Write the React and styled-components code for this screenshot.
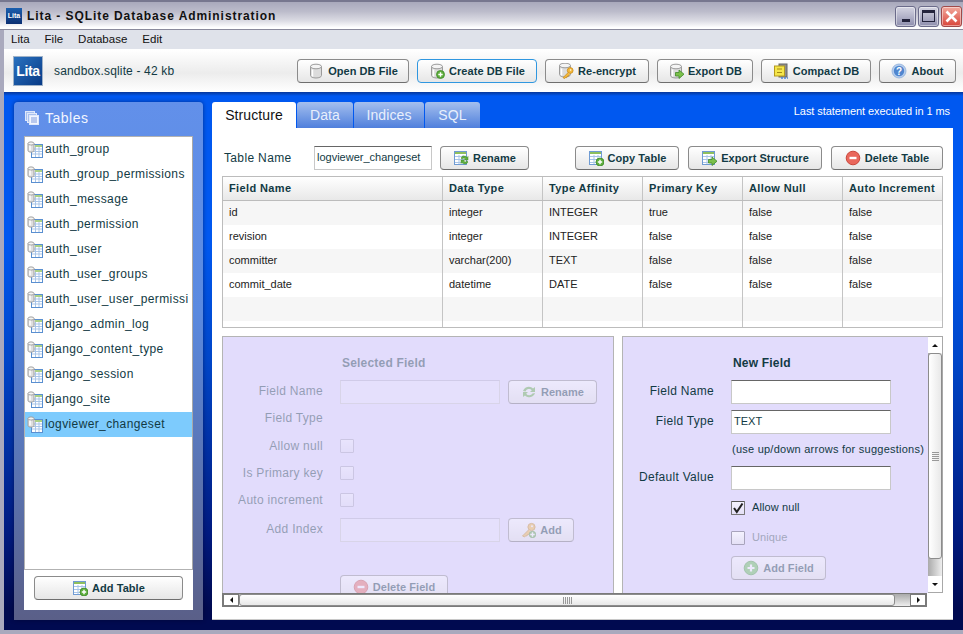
import React from "react"
import styled, { createGlobalStyle } from "styled-components"

const Global = createGlobalStyle`
  html, body { margin: 0; padding: 0; overflow: hidden; }
  body { font-family: "Liberation Sans", Arial, sans-serif; color: #123a44; }
  * { box-sizing: border-box; }
`

const Window = styled.div`
  width: 963px;
  height: 634px;
  display: flex;
  flex-direction: column;
  overflow: hidden;
  background: #a9a9bd;
`

const TitleBar = styled.div`
  height: 30px;
  flex: none;
  display: flex;
  align-items: center;
  padding: 1px 1px 0 6px;
  border-top: 2px solid #77778f;
  border-bottom: 1px solid #8a8a9c;
  background: linear-gradient(#a9a9bc 0%, #bcbccb 35%, #dcdce4 70%, #ffffff 95%);
`

const AppIcon = styled.div`
  width: 16px;
  height: 16px;
  margin-right: 5px;
  background: linear-gradient(#1b5fae, #0b2f72);
  color: #fff;
  font-size: 7px;
  font-weight: bold;
  line-height: 16px;
  text-align: center;
`

const Title = styled.div`
  font-size: 12px;
  font-weight: bold;
  letter-spacing: 0.93px;
  color: #111;
  flex: 1;
`

const WinButton = styled.div`
  width: 21px;
  height: 21px;
  margin-left: 2px;
  border: 1px solid ${p => (p.$close ? "#a04a4a" : "#6b6b8a")};
  border-radius: 3px;
  box-shadow: inset 0 0 0 1px rgba(255, 255, 255, 0.45);
  background: ${p => (p.$close ? "linear-gradient(#f2a99d, #d9453a)" : "linear-gradient(#d5d5e2, #8f8fae)")};
  display: flex;
  align-items: center;
  justify-content: center;
`

const MinGlyph = styled.div`
  width: 8px;
  height: 3px;
  margin-top: 9px;
  background: #23233c;
`

const MaxGlyph = styled.div`
  width: 13px;
  height: 12px;
  border: 1px solid #23233c;
  border-top-width: 3px;
`

const Inner = styled.div`
  flex: 1;
  min-height: 0;
  margin: 0 0 4px 4px;
  display: flex;
  flex-direction: column;
`

const MenuBar = styled.div`
  height: 20px;
  flex: none;
  display: flex;
  align-items: center;
  gap: 15px;
  padding: 0 0 1px 7px;
  background: #dfe2ea;
  border-bottom: 1px solid #fff;
  font-size: 11.5px;
  color: #111;
`

const ToolBar = styled.div`
  height: 42px;
  flex: none;
  display: flex;
  align-items: center;
  padding: 0 7px 0 9px;
  gap: 8px;
  background: linear-gradient(#ffffff, #ececec 55%, #ffffff);
`

const Logo = styled.div`
  width: 30px;
  height: 30px;
  background: linear-gradient(135deg, #2a72c0, #083a86);
  border: 1px solid #9fb2c8;
  color: #fff;
  font-size: 14px;
  font-weight: bold;
  letter-spacing: -0.3px;
  line-height: 28px;
  text-align: center;
`

const DbName = styled.div`
  margin-left: 3px;
  font-size: 12px;
  letter-spacing: 0.16px;
  flex: 1;
`

const Button = styled.div`
  width: ${p => p.$w}px;
  height: 24px;
  flex: none;
  display: flex;
  align-items: center;
  justify-content: center;
  gap: 4px;
  padding-bottom: 1px;
  border: 1px solid ${p => (p.$focus ? "#2f97e0" : "#8b8b8b")};
  border-bottom-color: ${p => (p.$focus ? "#2f97e0" : "#6e6e6e")};
  border-radius: 4px;
  background: linear-gradient(#ffffff, #e6e6e6);
  font-size: 11px;
  font-weight: bold;
  letter-spacing: 0.05px;
  white-space: nowrap;
  svg { flex: none; }
`

const Main = styled.div`
  flex: 1;
  min-height: 0;
  display: flex;
  gap: 9px;
  padding: 10px 10px 10px 10px;
  background: linear-gradient(#06369a 0, #0058f0 4px, #0058f0 28%, #0046c8 50%, #001a80 82%, #000a50 96%);
`

const SidePanel = styled.div`
  width: 189px;
  flex: none;
  display: flex;
  flex-direction: column;
  padding: 0 10px 10px;
  border-radius: 4px 4px 0 0;
  background: linear-gradient(#6290ea, #5a8ae0 40%, #5a5f88);
  box-shadow: 0 0 4px rgba(0, 0, 30, 0.45);
`

const SideHeader = styled.div`
  height: 34px;
  flex: none;
  display: flex;
  align-items: center;
  gap: 6px;
  padding: 0 0 3px 1px;
  color: #f2f6ff;
  font-size: 14px;
  letter-spacing: 0.5px;
`

const TableList = styled.div`
  flex: 1;
  min-height: 0;
  background: #fff;
  border: 1px solid #b2b2b2;
  border-right-color: #a8a8a8;
  overflow: hidden;
`

const TableItem = styled.div`
  height: 25px;
  display: flex;
  align-items: center;
  gap: 2px;
  padding: 0 3px 1px 2px;
  font-size: 12px;
  letter-spacing: 0.38px;
  white-space: nowrap;
  background: ${p => (p.$active ? "#7dcbfd" : "transparent")};
  svg { flex: none; }
`

const SideFooter = styled.div`
  height: 40px;
  flex: none;
  background: #fff;
  padding: 6px 10px 0;
`

const Content = styled.div`
  flex: 1;
  min-width: 0;
  display: flex;
  flex-direction: column;
`

const TabBar = styled.div`
  height: 26px;
  flex: none;
  display: flex;
`

const Tab = styled.div`
  width: ${p => p.$w}px;
  margin-right: 1px;
  border-radius: 3px 3px 0 0;
  display: flex;
  align-items: center;
  justify-content: center;
  font-size: 14px;
  padding-bottom: 1px;
  letter-spacing: 0.1px;
  color: ${p => (p.$active ? "#111" : "#e8effc")};
  background: ${p => (p.$active ? "#fff" : "linear-gradient(#a4bfee, #4f7fdc)")};
`

const Status = styled.div`
  margin-left: auto;
  padding: 3px 3px 0 0;
  color: #fff;
  font-size: 11px;
  letter-spacing: -0.07px;
`

const Sheet = styled.div`
  flex: 1;
  min-height: 0;
  display: flex;
  flex-direction: column;
  padding: 18px 10px 13px;
  background: #fff;
  border-bottom: 1px solid #c8c8c8;
`

const ActionRow = styled.div`
  height: 24px;
  flex: none;
  display: flex;
  align-items: center;
  gap: 8px;
  padding-left: 2px;
`

const ButtonGroup = styled.div`
  margin-left: auto;
  display: flex;
  gap: 9px;
`

const TableLabel = styled.div`
  width: 82px;
  font-size: 12px;
  letter-spacing: 0.35px;
`

const Input = styled.div`
  width: ${p => p.$w}px;
  height: 24px;
  flex: none;
  padding: 0 2px;
  font-size: 11px;
  line-height: 20px;
  white-space: nowrap;
  overflow: hidden;
  background: ${p => (p.$disabled ? "#ece8fd" : "#fff")};
  border: 1px solid #c8c8c8;
  border-top-color: ${p => (p.$disabled ? "#b4b0c8" : "#666")};
`

const Spacer = styled.div`
  flex: 1;
`

const Grid = styled.div`
  height: 152px;
  flex: none;
  margin-top: 6px;
  border: 1px solid #bcbcbc;
  overflow: hidden;
`

const GridRow = styled.div`
  height: 24px;
  display: grid;
  grid-template-columns: 220px 100px 100px 100px 100px 1fr;
  background: ${p => (p.$alt ? "#f6f6f6" : "#fff")};
`

const GridHead = styled(GridRow)`
  height: 24px;
  background: linear-gradient(#ffffff, #e8e8e8);
  border-bottom: 1px solid #bcbcbc;
  font-size: 11px;
  font-weight: bold;
  letter-spacing: 0.38px;
`

const Cell = styled.div`
  padding-left: 6px;
  font-size: 11px;
  line-height: 23px;
  color: #222;
  border-right: 1px solid #c4c4c4;
  white-space: nowrap;
  overflow: hidden;
  &:last-child { border-right: 0; }
`

const HeadCell = styled(Cell)`
  color: #123a44;
`

const ScrollPane = styled.div`
  height: 271px;
  flex: none;
  margin-top: 8px;
  display: grid;
  grid-template-columns: 706px 15px;
  grid-template-rows: 257px 14px;
`

const Viewport = styled.div`
  display: flex;
  gap: 8px;
  overflow: hidden;
`

const FormPanel = styled.div`
  width: ${p => p.$w}px;
  flex: none;
  height: 300px;
  padding-top: 16px;
  border: 1px solid #b4b4b4;
  border-right-width: ${p => (p.$open ? 0 : 1)}px;
  background: #e2dcfc;
`

const FormBody = styled.div`
  opacity: ${p => (p.$disabled ? 0.38 : 1)};
`

const FormRow = styled.div`
  height: ${p => p.$h || 24}px;
  margin-top: ${p => p.$mt || 0}px;
  display: flex;
  align-items: center;
  gap: 8px;
`

const FormLabel = styled.div`
  width: ${p => p.$w}px;
  flex: none;
  margin-right: 9px;
  padding-bottom: ${p => (p.$lift ? 3 : 0)}px;
  text-align: right;
  font-size: 12px;
  letter-spacing: 0.3px;
  white-space: nowrap;
`

const FormTitle = styled.div`
  font-size: 12px;
  font-weight: bold;
  padding: 2px 0 0 2px;
  letter-spacing: 0.2px;
`

const Hint = styled.div`
  font-size: 11px;
  letter-spacing: 0.24px;
  white-space: nowrap;
  padding-left: 1px;
`

const Check = styled.div`
  width: 14px;
  height: 14px;
  flex: none;
  display: flex;
  align-items: center;
  justify-content: center;
  border: 1px solid ${p => (p.$checked ? "#777" : "#a8a4bc")};
  border-top-color: ${p => (p.$checked ? "#555" : "#a8a4bc")};
  background: linear-gradient(#f4f2fe, #e4e0f6);
  border-radius: 1px;
`

const CheckText = styled.div`
  font-size: 11px;
  margin-left: -1px;
  padding-bottom: 2px;
  letter-spacing: 0.1px;
  color: ${p => (p.$muted ? "#a3a7bd" : "#123a44")};
`

const VScroll = styled.div`
  display: flex;
  flex-direction: column;
  border: 1px solid #a8a8a8;
  border-left: 0;
  background: linear-gradient(90deg, #aaa, #eee);
`

const HScroll = styled.div`
  display: flex;
  width: 705px;
  border: 1px solid #7a7a7a;
  background: linear-gradient(#aaa, #eee);
`

const ScrollEnd = styled.div`
  width: ${p => (p.$v ? "100%" : "16px")};
  height: ${p => (p.$v ? "16px" : "100%")};
  flex: none;
  display: flex;
  align-items: center;
  justify-content: center;
  background: #fff;
  ${p => (p.$v ? "" : "box-shadow: 0 0 0 1px #7a7a7a inset;")}
`

const Thumb = styled.div`
  display: flex;
  align-items: center;
  justify-content: center;
  flex: none;
  ${p => (p.$v ? "height: 206px; width: 100%;" : "width: 656px; height: 100%;")}
  background: ${p => (p.$v ? "linear-gradient(90deg, #fff, #e8e8e8)" : "linear-gradient(#fff, #e8e8e8)")};
  border: 1px solid #8c8c8c;
  border-radius: 3px;
`

const Grip = styled.div`
  ${p => (p.$v
    ? "width: 7px; height: 9px; background: repeating-linear-gradient(#999 0 1px, transparent 1px 2px);"
    : "width: 9px; height: 7px; background: repeating-linear-gradient(90deg, #999 0 1px, transparent 1px 2px);")}
`

const Arrow = styled.div`
  width: 0;
  height: 0;
  ${p => p.$dir === "up" && "border: 3px solid transparent; border-top: 0; border-bottom-color: #111;"}
  ${p => p.$dir === "down" && "border: 3px solid transparent; border-bottom: 0; border-top-color: #111;"}
  ${p => p.$dir === "left" && "border: 3px solid transparent; border-left: 0; border-right-color: #111;"}
  ${p => p.$dir === "right" && "border: 3px solid transparent; border-right: 0; border-left-color: #111;"}
`

// icons
const Cylinder = () => (
  <>
    <path d="M2.5 3.5v9c0 1.4 2.4 2.5 5.5 2.5s5.5-1.1 5.5-2.5v-9z" fill="#dcdcdc" stroke="#9a9a9a" />
    <ellipse cx="8" cy="3.5" rx="5.5" ry="2.3" fill="#f4f4f4" stroke="#9a9a9a" />
    <path d="M4.5 6.5v7" stroke="#fff" strokeWidth="1.5" />
  </>
)

const Plus = ({ x = 11.5, y = 11.5, r = 4 }) => (
  <>
    <circle cx={x} cy={y} r={r} fill="#5fae3c" stroke="#3e8a2a" strokeWidth="0.8" />
    <path d={`M${x - 2.2} ${y}h4.4M${x} ${y - 2.2}v4.4`} stroke="#fff" strokeWidth="1.4" />
  </>
)

const GreenArrow = () => (
  <path d="M7.5 9.5h3.5V7l5 4.2-5 4.3v-2.5H7.5z" fill="#7cc04a" stroke="#3f8a2a" strokeWidth="0.8" />
)

const Grid16 = () => (
  <>
    <rect x="1.5" y="1.5" width="12" height="13" fill="#fff" stroke="#6f9bd3" />
    <path d="M2 3h11" stroke="#8ec05e" strokeWidth="2" />
    <path d="M2 6.5h11M2 9.5h11M2 12.5h11M6 5v9M10 5v9" stroke="#a9c5e8" />
  </>
)

const Key = () => (
  <>
    <circle cx="11.5" cy="5" r="3.6" fill="#f5b93a" stroke="#c68a1e" />
    <path d="M9 7.5 2.5 14l2.2 1 1-1.4 1.2.4.6-1.6 1.5-.2 1.6-2.2" fill="#f5b93a" stroke="#c68a1e" />
    <circle cx="12" cy="4.3" r="1" fill="#fff" />
  </>
)

const Icon = ({ children, size = 16 }) => (
  <svg width={size} height={size} viewBox="0 0 16 16">{children}</svg>
)

const DbOpen = () => <Icon><Cylinder /></Icon>
const DbCreate = () => <Icon><Cylinder /><Plus /></Icon>
const DbKey = () => <Icon><g transform="translate(-1 -1)"><Cylinder /></g><g transform="translate(3 3.5) scale(.8)"><Key /></g></Icon>
const DbExport = () => <Icon><Cylinder /><GreenArrow /></Icon>
const Compact = () => (
  <Icon>
    <rect x="6" y="1" width="8" height="13" fill="#8e8e8e" stroke="#666" />
    <rect x="1.5" y="3" width="10" height="10" fill="#f5e64a" stroke="#b49a1e" />
    <path d="M4 6h5M4 9.5h5" stroke="#a48a16" />
    <path d="M8 15h7" stroke="#4c84d8" strokeWidth="1.6" strokeDasharray="2 1" />
  </Icon>
)
const Help = () => (
  <Icon>
    <circle cx="8" cy="8" r="7" fill="#b6cdec" stroke="#8fb0dc" strokeWidth="0.8" />
    <circle cx="8" cy="8" r="5.2" fill="#4f86cf" />
    <text x="8" y="11.5" fontSize="10" fontWeight="bold" fill="#fff" textAnchor="middle" fontFamily="Liberation Sans">?</text>
  </Icon>
)
const TableRefresh = () => (
  <Icon>
    <Grid16 />
    <path d="M8 8a3.5 3.5 0 0 1 6-.5l1-1v3.5h-3.5l1-1A2.4 2.4 0 0 0 9 9z" fill="#5fae3c" stroke="#3e8a2a" strokeWidth="0.5" />
    <path d="M15 12a3.5 3.5 0 0 1-6 .5l-1 1V10h3.5l-1 1A2.4 2.4 0 0 0 14 11z" fill="#5fae3c" stroke="#3e8a2a" strokeWidth="0.5" />
  </Icon>
)
const Refresh = () => (
  <Icon>
    <path d="M2 7a6 6 0 0 1 10-2.5L14 3v5H9l1.8-1.8A3.8 3.8 0 0 0 4.5 7.5z" fill="#5fae3c" />
    <path d="M14 9a6 6 0 0 1-10 2.5L2 13V8h5L5.2 9.8a3.8 3.8 0 0 0 6.3-.3z" fill="#5fae3c" />
  </Icon>
)
const TableAdd = () => <Icon><Grid16 /><Plus x={12} y={12} /></Icon>
const TableExport = () => <Icon><Grid16 /><GreenArrow /></Icon>
const Remove = () => (
  <Icon>
    <circle cx="8" cy="8" r="6.8" fill="#e9675c" stroke="#c9473c" />
    <path d="M4.5 8h7" stroke="#fff" strokeWidth="2.4" />
  </Icon>
)
const AddRound = () => (
  <Icon>
    <circle cx="8" cy="8" r="6.8" fill="#5fbf4a" stroke="#3f9a30" />
    <path d="M4.5 8h7M8 4.5v7" stroke="#fff" strokeWidth="2.2" />
  </Icon>
)
const KeyAdd = () => <Icon><Key /><Plus x={12.5} y={12.5} r={3.2} /></Icon>
const ListTable = () => (
  <svg width="16" height="17" viewBox="0 0 16 17">
    <rect x="4.5" y="3.5" width="11" height="13" fill="#fff" stroke="#5a8fd0" />
    <path d="M8 5h7" stroke="#8ec05e" strokeWidth="1.5" />
    <path d="M5 8h10M5 10.5h10M5 13h10M8.5 6v10M12 6v10" stroke="#a9c5e8" />
    <path d="M1 2.5v7c0 1 1.3 1.6 3 1.6s3-.6 3-1.6v-7z" fill="#dedede" stroke="#a0a0a0" />
    <ellipse cx="4" cy="2.5" rx="3" ry="1.6" fill="#f5f5f5" stroke="#a0a0a0" />
    <path d="M3 4.5v5" stroke="#fff" strokeWidth="1.5" />
  </svg>
)
const TablesIcon = () => (
  <svg width="14" height="14" viewBox="0 0 14 14">
    <rect x="0.5" y="0.5" width="9" height="9" fill="#a8c0ee" stroke="#dfe8fa" />
    <rect x="2.5" y="2.5" width="9" height="9" fill="#a8c0ee" stroke="#dfe8fa" />
    <rect x="4.5" y="4.5" width="9" height="9" fill="#f2f6ff" stroke="#dfe8fa" />
    <path d="M6 7h6M6 9h6M6 11h6" stroke="#7e9adb" />
  </svg>
)
const CloseX = () => (
  <svg width="13" height="13" viewBox="0 0 13 13">
    <path d="M1.5 1.5l10 10M11.5 1.5l-10 10" stroke="#fff" strokeWidth="2.6" />
  </svg>
)
const Tick = () => (
  <svg width="12" height="12" viewBox="0 0 12 12">
    <path d="M2 6l2.8 4L10.5 1.5" fill="none" stroke="#222" strokeWidth="2" />
  </svg>
)

const tables = [
  "auth_group",
  "auth_group_permissions",
  "auth_message",
  "auth_permission",
  "auth_user",
  "auth_user_groups",
  "auth_user_user_permissi",
  "django_admin_log",
  "django_content_type",
  "django_session",
  "django_site",
  "logviewer_changeset",
]

const columns = ["Field Name", "Data Type", "Type Affinity", "Primary Key", "Allow Null", "Auto Increment"]

const rows = [
  ["id", "integer", "INTEGER", "true", "false", "false"],
  ["revision", "integer", "INTEGER", "false", "false", "false"],
  ["committer", "varchar(200)", "TEXT", "false", "false", "false"],
  ["commit_date", "datetime", "DATE", "false", "false", "false"],
  ["", "", "", "", "", ""],
  ["", "", "", "", "", ""],
]

const App = () => {
  return (
    <Window>
      <Global />
      <TitleBar>
        <AppIcon>Lita</AppIcon>
        <Title>Lita - SQLite Database Administration</Title>
        <WinButton><MinGlyph /></WinButton>
        <WinButton><MaxGlyph /></WinButton>
        <WinButton $close><CloseX /></WinButton>
      </TitleBar>
      <Inner>
        <MenuBar>
          <span>Lita</span>
          <span>File</span>
          <span>Database</span>
          <span>Edit</span>
        </MenuBar>
        <ToolBar>
          <Logo>Lita</Logo>
          <DbName>sandbox.sqlite - 42 kb</DbName>
          <Button $w={112}><DbOpen />Open DB File</Button>
          <Button $w={120} $focus><DbCreate />Create DB File</Button>
          <Button $w={104}><DbKey />Re-encrypt</Button>
          <Button $w={96}><DbExport />Export DB</Button>
          <Button $w={110}><Compact />Compact DB</Button>
          <Button $w={77}><Help />About</Button>
        </ToolBar>
        <Main>
          <SidePanel>
            <SideHeader><TablesIcon />Tables</SideHeader>
            <TableList>
              {tables.map((t, i) => (
                <TableItem key={t} $active={i === tables.length - 1}>
                  <ListTable />{t}
                </TableItem>
              ))}
            </TableList>
            <SideFooter>
              <Button $w={149}><TableAdd />Add Table</Button>
            </SideFooter>
          </SidePanel>
          <Content>
            <TabBar>
              <Tab $w={84} $active>Structure</Tab>
              <Tab $w={56}>Data</Tab>
              <Tab $w={70}>Indices</Tab>
              <Tab $w={55}>SQL</Tab>
              <Status>Last statement executed in 1 ms</Status>
            </TabBar>
            <Sheet>
              <ActionRow>
                <TableLabel>Table Name</TableLabel>
                <Input $w={118}>logviewer_changeset</Input>
                <Button $w={89}><TableRefresh />Rename</Button>
                <ButtonGroup>
                  <Button $w={104}><TableAdd />Copy Table</Button>
                  <Button $w={134}><TableExport />Export Structure</Button>
                  <Button $w={112}><Remove />Delete Table</Button>
                </ButtonGroup>
              </ActionRow>
              <Grid>
                <GridHead>
                  {columns.map(c => <HeadCell key={c}>{c}</HeadCell>)}
                </GridHead>
                {rows.map((r, i) => (
                  <GridRow key={i} $alt={i % 2 === 0}>
                    {r.map((v, j) => <Cell key={j}>{v}</Cell>)}
                  </GridRow>
                ))}
              </Grid>
              <ScrollPane>
                <Viewport>
                  <FormPanel $w={392}>
                    <FormBody $disabled>
                      <FormRow $h={18}>
                        <FormLabel $w={100} />
                        <FormTitle>Selected Field</FormTitle>
                      </FormRow>
                      <FormRow $mt={9}>
                        <FormLabel $w={100} $lift>Field Name</FormLabel>
                        <Input $w={160} $disabled />
                        <Button $w={89}><Refresh />Rename</Button>
                      </FormRow>
                      <FormRow $h={28}>
                        <FormLabel $w={100}>Field Type</FormLabel>
                      </FormRow>
                      <FormRow $h={27}>
                        <FormLabel $w={100}>Allow null</FormLabel>
                        <Check />
                      </FormRow>
                      <FormRow $h={27}>
                        <FormLabel $w={100}>Is Primary key</FormLabel>
                        <Check />
                      </FormRow>
                      <FormRow $h={27}>
                        <FormLabel $w={100}>Auto increment</FormLabel>
                        <Check />
                      </FormRow>
                      <FormRow $mt={5}>
                        <FormLabel $w={100} $lift>Add Index</FormLabel>
                        <Input $w={160} $disabled />
                        <Button $w={66}><KeyAdd />Add</Button>
                      </FormRow>
                      <FormRow $mt={33}>
                        <FormLabel $w={100} />
                        <Button $w={108}><Remove />Delete Field</Button>
                      </FormRow>
                    </FormBody>
                  </FormPanel>
                  <FormPanel $w={306} $open>
                    <FormBody>
                      <FormRow $h={18}>
                        <FormLabel $w={91} />
                        <FormTitle>New Field</FormTitle>
                      </FormRow>
                      <FormRow $mt={9}>
                        <FormLabel $w={91} $lift>Field Name</FormLabel>
                        <Input $w={160} />
                      </FormRow>
                      <FormRow $mt={6}>
                        <FormLabel $w={91} $lift>Field Type</FormLabel>
                        <Input $w={160}>TEXT</Input>
                      </FormRow>
                      <FormRow $mt={3}>
                        <FormLabel $w={91} />
                        <Hint>(use up/down arrows for suggestions)</Hint>
                      </FormRow>
                      <FormRow $mt={5}>
                        <FormLabel $w={91} $lift>Default Value</FormLabel>
                        <Input $w={160} />
                      </FormRow>
                      <FormRow $mt={6}>
                        <FormLabel $w={91} />
                        <Check $checked><Tick /></Check>
                        <CheckText>Allow null</CheckText>
                      </FormRow>
                      <FormRow $mt={6}>
                        <FormLabel $w={91} />
                        <Check />
                        <CheckText $muted>Unique</CheckText>
                      </FormRow>
                      <FormRow $mt={6}>
                        <FormLabel $w={91} />
                        <FormBody $disabled>
                          <Button $w={95}><AddRound />Add Field</Button>
                        </FormBody>
                      </FormRow>
                    </FormBody>
                  </FormPanel>
                </Viewport>
                <VScroll>
                  <ScrollEnd $v><Arrow $dir="up" /></ScrollEnd>
                  <Thumb $v><Grip $v /></Thumb>
                  <Spacer />
                  <ScrollEnd $v><Arrow $dir="down" /></ScrollEnd>
                </VScroll>
                <HScroll>
                  <ScrollEnd><Arrow $dir="left" /></ScrollEnd>
                  <Thumb><Grip /></Thumb>
                  <Spacer />
                  <ScrollEnd><Arrow $dir="right" /></ScrollEnd>
                </HScroll>
              </ScrollPane>
            </Sheet>
          </Content>
        </Main>
      </Inner>
    </Window>
  )
}

export default App
